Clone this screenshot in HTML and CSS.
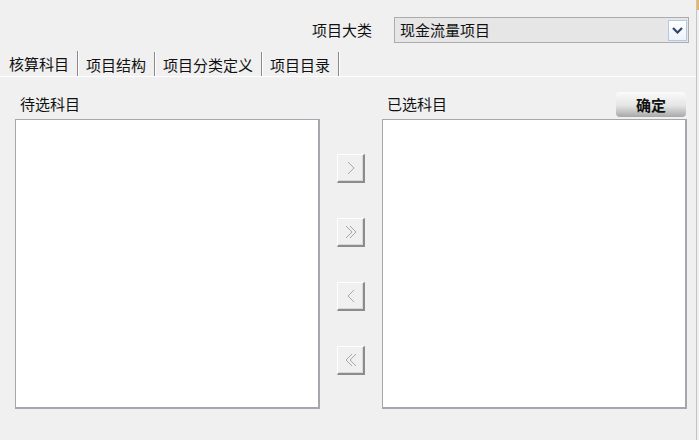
FILE: index.html
```html
<!DOCTYPE html>
<html lang="zh">
<head>
  <meta charset="UTF-8">
  <title>项目大类</title>
  <link rel="stylesheet" href="styles.css">
</head>
<body>
  <div class="frame">
    <div class="main">
      <!-- 顶部：项目大类选择 -->
      <div class="topbar">
        <span class="top-label">项目大类</span>
        <div class="combo">
          <span class="combo-text">现金流量项目</span>
          <span class="combo-btn">
            <svg width="11" height="7" viewBox="0 0 11 7"><polyline points="1,1 5.5,5.5 10,1" fill="none" stroke="#34466e" stroke-width="2.2"/></svg>
          </span>
        </div>
      </div>

      <!-- 选项卡 -->
      <div class="tabs">
        <div class="tab active">核算科目</div>
        <div class="tab">项目结构</div>
        <div class="tab">项目分类定义</div>
        <div class="tab">项目目录</div>
      </div>

      <!-- 科目选择 -->
      <div class="panel">
        <div class="col">
          <div class="col-head"><span>待选科目</span></div>
          <div class="list"></div>
        </div>
        <div class="mover">
          <button class="mv"><svg width="10" height="16" viewBox="0 0 10 16"><polyline points="2,2 8,8 2,14" fill="none" stroke="#a8a8a8" stroke-width="1"/></svg></button>
          <button class="mv"><svg width="14" height="16" viewBox="0 0 14 16"><polyline points="2,2 8,8 2,14" fill="none" stroke="#a8a8a8" stroke-width="1"/><polyline points="6,2 12,8 6,14" fill="none" stroke="#a8a8a8" stroke-width="1"/></svg></button>
          <button class="mv"><svg width="10" height="16" viewBox="0 0 10 16"><polyline points="8,2 2,8 8,14" fill="none" stroke="#a8a8a8" stroke-width="1"/></svg></button>
          <button class="mv"><svg width="14" height="16" viewBox="0 0 14 16"><polyline points="8,2 2,8 8,14" fill="none" stroke="#a8a8a8" stroke-width="1"/><polyline points="12,2 6,8 12,14" fill="none" stroke="#a8a8a8" stroke-width="1"/></svg></button>
        </div>
        <div class="col">
          <div class="col-head"><span>已选科目</span><button class="ok">确定</button></div>
          <div class="list"></div>
        </div>
      </div>
    </div>
    <div class="edge"></div>
  </div>
</body>
</html>
```

FILE: styles.css
```css
body {
  margin: 0;
  background: #f0f0f0;
  font-family: "Noto Sans CJK SC", "Noto Sans", sans-serif;
  font-size: 15px;
  color: #111;
}
.frame {
  display: flex;
  width: 699px;
  height: 440px;
}
.main {
  flex: 1;
}
.edge {
  width: 2px;
  border-left: 1px solid #c4c4c4;
  background: linear-gradient(#e9b46a 0, #e9b46a 10px, #f0f0f0 10px);
}
.topbar {
  display: flex;
  justify-content: flex-end;
  align-items: center;
  height: 50px;
  padding: 0 7px 0 0;
  box-sizing: border-box;
  padding-top: 10px;
}
.top-label {
  margin-right: 22px;
  line-height: 20px;
}
.combo {
  display: flex;
  align-items: center;
  width: 295px;
  height: 26px;
  box-sizing: border-box;
  border: 1px solid #acacac;
  background: #e6e6e6;
}
.combo-text {
  flex: 1;
  padding-left: 5px;
  line-height: 20px;
}
.combo-btn {
  display: flex;
  align-items: center;
  justify-content: center;
  width: 19px;
  height: 21px;
  margin-right: 1px;
  box-sizing: border-box;
  border: 1px solid #b4c8e6;
  background: linear-gradient(#ffffff, #eef3fa);
}
.tabs {
  display: flex;
  height: 26px;
  border-bottom: 1px solid #ffffff;
}
.tab {
  padding: 0 8px 0 7px;
  line-height: 25px;
  margin-top: 2px;
  border-right: 1px solid #8a8a8a;
  box-shadow: 1px 0 0 #ffffff;
  margin-right: 1px;
}
.tab.active {
  padding-left: 9px;
  margin-top: 1px;
}
.panel {
  display: grid;
  grid-template-columns: 305px 62px 305px;
  padding: 15px 0 0 15px;
}
.col-head {
  display: flex;
  justify-content: space-between;
  align-items: flex-end;
  height: 26px;
  padding-left: 5px;
  margin-bottom: 1px;
}
.col-head span {
  line-height: 20px;
  margin-bottom: 4px;
}
.list {
  height: 290px;
  box-sizing: border-box;
  background: #ffffff;
  border: 1px solid #a6a6ae;
  border-right-width: 2px;
  border-bottom-width: 2px;
}
.ok {
  width: 70px;
  height: 25px;
  margin-right: 1px;
  margin-bottom: 1px;
  border: none;
  border-radius: 4px;
  background: linear-gradient(#fbfbfb, #e4e4e4 55%, #a8a8a8);
  font-family: inherit;
  font-size: 15px;
  font-weight: bold;
  color: #111;
  padding: 0;
}
.mover {
  display: flex;
  flex-direction: column;
  align-items: center;
  gap: 35px;
  padding-top: 62px;
}
.mv {
  display: flex;
  align-items: center;
  justify-content: center;
  width: 28px;
  height: 29px;
  padding: 0;
  background: #f0f0f0;
  border: 1px solid #ffffff;
  border-right: 2px solid #8c8c8c;
  border-bottom: 2px solid #8c8c8c;
  box-shadow: inset -1px -1px 0 #d8d8d8;
}
```
